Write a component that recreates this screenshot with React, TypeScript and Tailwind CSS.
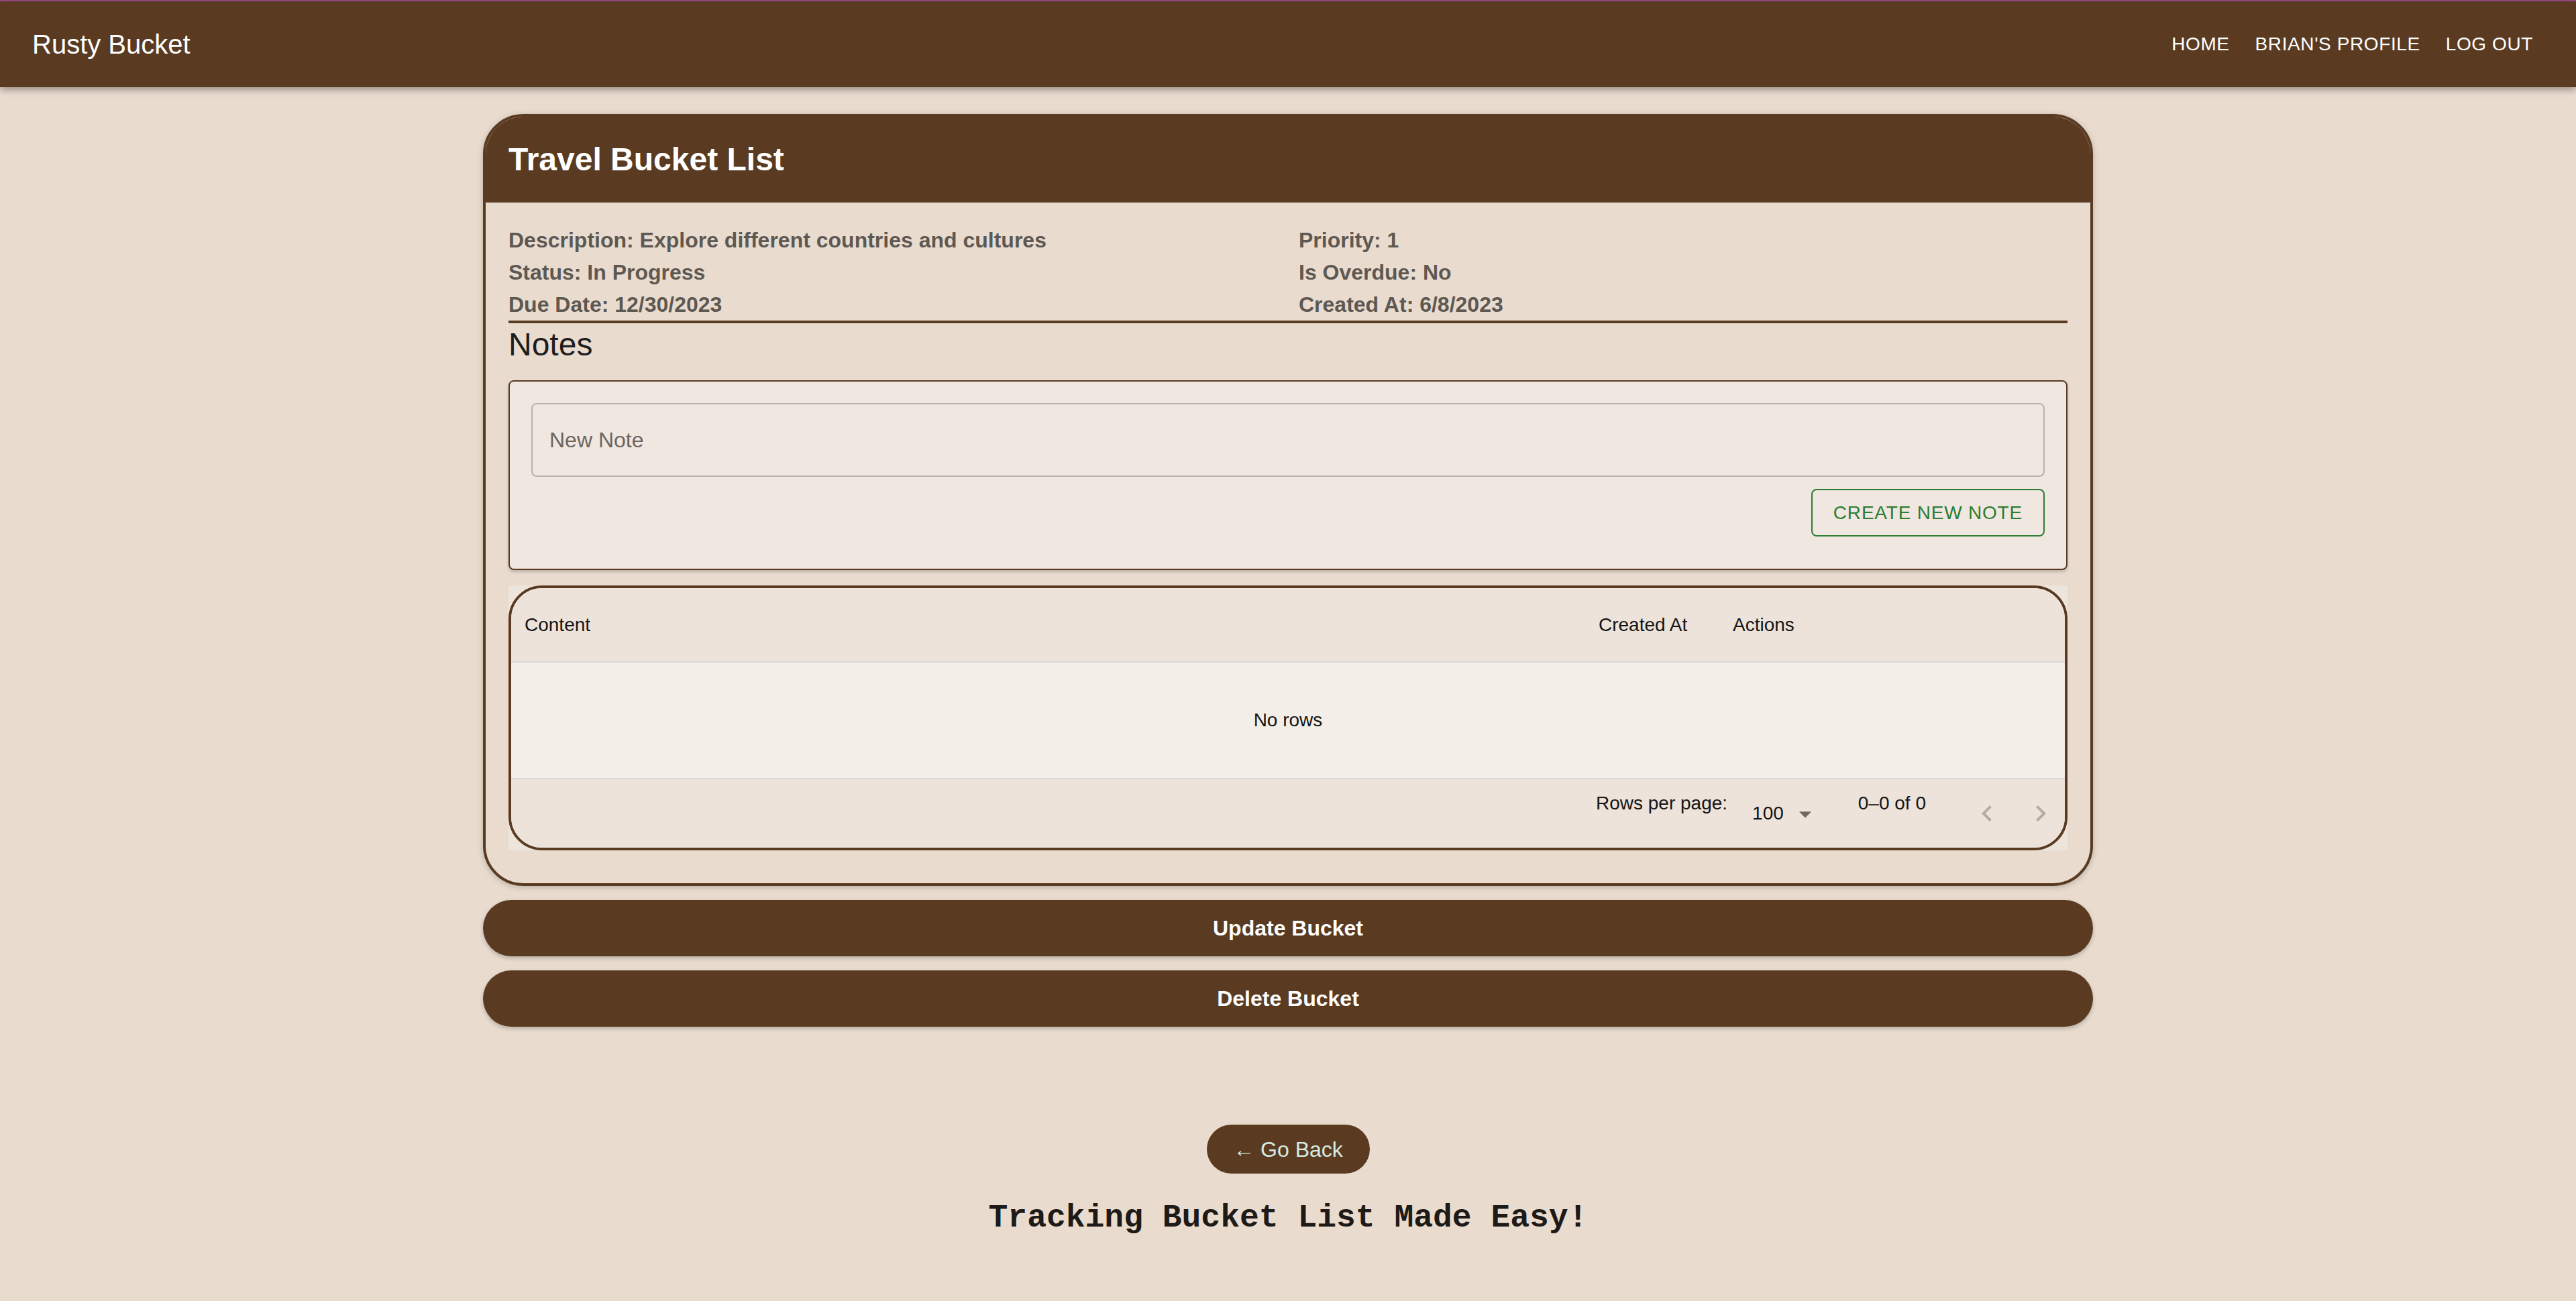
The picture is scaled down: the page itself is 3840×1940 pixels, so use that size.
import React from 'react';

const BROWN = 'bg-[#5a3b22]';

const details = {
  left: [
    'Description: Explore different countries and cultures',
    'Status: In Progress',
    'Due Date: 12/30/2023',
  ],
  right: ['Priority: 1', 'Is Overdue: No', 'Created At: 6/8/2023'],
};

const ChevronLeft = () => (
  <svg width="48" height="48" viewBox="0 0 24 24" className="fill-[#b3aca6]">
    <path d="M15.41 16.59 10.83 12l4.58-4.59L14 6l-6 6 6 6 1.41-1.41z" />
  </svg>
);

const ChevronRight = () => (
  <svg width="48" height="48" viewBox="0 0 24 24" className="fill-[#b3aca6]">
    <path d="M8.59 16.59 13.17 12 8.59 7.41 10 6l6 6-6 6-1.41-1.41z" />
  </svg>
);

const NavBar = () => (
  <div>
    <div className="h-[2px] bg-[#9b4a8d]" />
    <header className={`flex h-[128px] items-center justify-between ${BROWN} px-[48px] shadow-[0_4px_10px_rgba(0,0,0,0.35)]`}>
      <span className="text-[40px] leading-none text-white">Rusty Bucket</span>
      <nav className="flex items-center gap-[6px]">
        {['Home', "Brian's Profile", 'Log Out'].map((label) => (
          <a key={label} className="px-[16px] py-[12px] text-[28px] uppercase leading-none tracking-[0.6px] text-white">
            {label}
          </a>
        ))}
      </nav>
    </header>
  </div>
);

const NotesTable = () => (
  <div className="mt-[23px] bg-[#ede4db]">
    <div className="overflow-hidden rounded-[50px] border-4 border-[#5a3b22] text-[28px] leading-none text-[#141414]">
      <div className="flex h-[111px] items-center border-b-2 border-[#dcd7d2] bg-[#ede3da]">
        <div className="w-[1601px] pl-[20px]">Content</div>
        <div className="w-[200px] pl-[20px]">Created At</div>
        <div className="w-[200px] pl-[20px]">Actions</div>
      </div>
      <div className="flex h-[174px] items-center justify-center border-b-2 border-[#dcd7d2] bg-[#f3eee8]">
        No rows
      </div>
      <div className="-mr-[4px] flex h-[102px] items-start justify-end bg-[#ede3da]">
        <span className="mt-[22px]">Rows per page:</span>
        <span className="ml-[37px] mt-[37px]">100</span>
        <svg width="44" height="44" viewBox="0 0 24 24" className="ml-[10px] mt-[30px] fill-[#6e6863]">
          <path d="M7 10l5 5 5-5z" />
        </svg>
        <span className="ml-[57px] mt-[22px]">0–0 of 0</span>
        <div className="ml-[51px] mt-[11px] flex h-[80px] w-[80px] items-center justify-center">
          <ChevronLeft />
        </div>
        <div className="mt-[11px] flex h-[80px] w-[80px] items-center justify-center">
          <ChevronRight />
        </div>
      </div>
    </div>
  </div>
);

const BucketCard = () => (
  <div className="overflow-hidden rounded-[60px] border-4 border-[#5a3b22] bg-[#e9dccf] shadow-[0_2px_10px_rgba(0,0,0,0.22)]">
    <div className={`flex h-[128px] items-center ${BROWN} px-[34px]`}>
      <h1 className="text-[48px] font-bold leading-none text-white">Travel Bucket List</h1>
    </div>
    <div className="px-[34px] pb-[49px] pt-[32px]">
      <div className="grid grid-cols-2 gap-x-[32px] text-[32px] font-bold leading-[48px] text-[#5e5852]">
        <div>
          {details.left.map((line) => (
            <p key={line}>{line}</p>
          ))}
        </div>
        <div>
          {details.right.map((line) => (
            <p key={line}>{line}</p>
          ))}
        </div>
      </div>
      <div className={`h-[4px] ${BROWN}`} />
      <h2 className="text-[48px] leading-[64px] text-[#1d1d1d]">Notes</h2>

      <div className="mt-[21px] rounded-[8px] border-2 border-[#5a3b22] bg-[#efe7e0] px-[32px] pb-[48px] pt-[32px] shadow-[0_3px_4px_rgba(0,0,0,0.18)]">
        <div className="flex h-[110px] items-center rounded-[8px] border-2 border-[#b8b3ae] px-[25px] text-[32px] text-[#6b6560]">
          New Note
        </div>
        <div className="mt-[18px] flex justify-end">
          <button className="h-[71px] rounded-[8px] border-2 border-[#2e7d32] px-[31px] text-[28px] uppercase leading-none tracking-[0.8px] text-[#2e7d32]">
            Create New Note
          </button>
        </div>
      </div>

      <NotesTable />
    </div>
  </div>
);

export default function App() {
  return (
    <div className="min-h-screen bg-[#e9dccf] pb-[80px] font-['Liberation_Sans',Arial,sans-serif]">
      <NavBar />
      <main className="mx-auto mt-[40px] w-[2400px]">
        <BucketCard />
        <button className={`mt-[21px] h-[84px] w-full rounded-full ${BROWN} text-[32px] font-bold text-white shadow-[0_3px_6px_rgba(0,0,0,0.22)]`}>
          Update Bucket
        </button>
        <button className={`mt-[21px] h-[84px] w-full rounded-full ${BROWN} text-[32px] font-bold text-white shadow-[0_3px_6px_rgba(0,0,0,0.22)]`}>
          Delete Bucket
        </button>
        <div className="mt-[146px] flex justify-center">
          <button className={`flex h-[73px] w-[243px] items-center justify-center rounded-full ${BROWN} text-[32px] text-[#d6ebe2]`}>
            ← Go Back
          </button>
        </div>
        <p className="mt-[42px] text-center font-['Liberation_Mono','Courier_New',monospace] text-[48px] font-bold leading-[48px] text-[#1e1a17]">
          Tracking Bucket List Made Easy!
        </p>
      </main>
    </div>
  );
}
